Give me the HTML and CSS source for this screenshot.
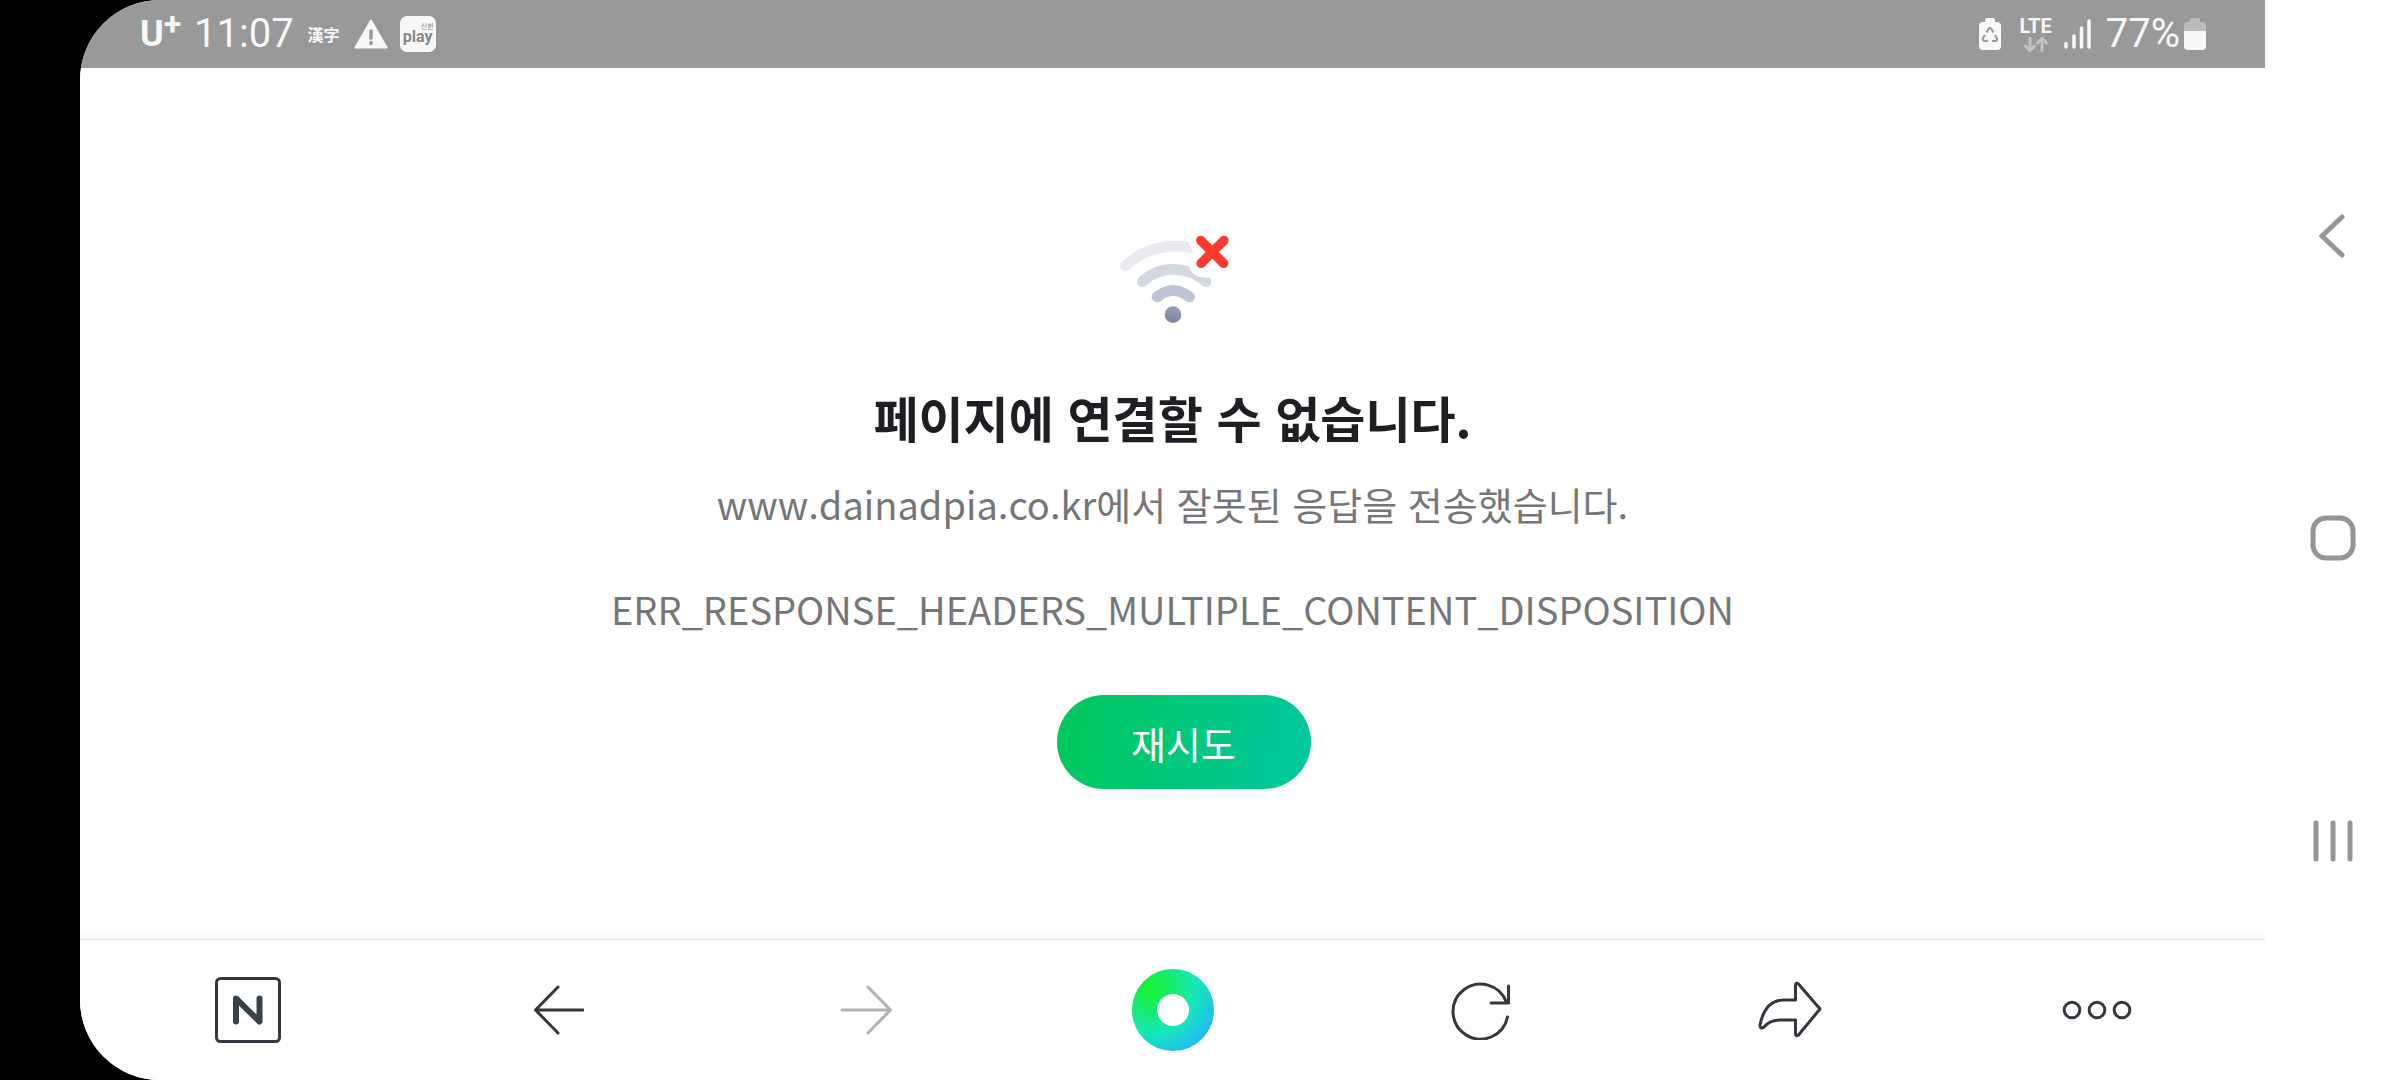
FILE: index.html
```html
<!DOCTYPE html>
<html lang="ko">
<head>
  <meta charset="UTF-8">
  <meta name="viewport" content="width=device-width, initial-scale=1">
  <title>페이지에 연결할 수 없습니다.</title>
  <link rel="stylesheet" href="styles.css">
</head>
<body>
  <div class="screen">
    <header class="status-bar">
      <div class="status-left">
        <span class="carrier">U<sup>+</sup></span>
        <span class="status-text">11:07</span>
        <span class="hanja">漢字</span>
        <svg class="warning" width="34" height="30" viewBox="0 0 34 30">
          <path d="M17 1.500L32.500 28.500H1.500z" fill="#f8f8f8" stroke="#f8f8f8" stroke-width="2" stroke-linejoin="round"/>
          <path d="M17 12v7M17 23.500v1" stroke="#999" stroke-width="3.500" stroke-linecap="round"/>
        </svg>
        <span class="play-app"><small>신한</small><b>play</b></span>
      </div>
      <div class="status-right">
        <svg class="saver" width="22" height="32" viewBox="0 0 22 32">
          <path d="M6 4V2q0-2 2-2h6q2 0 2 2v2h2q4 0 4 4v20q0 4-4 4H4q-4 0-4-4V8q0-4 4-4z" fill="#f8f8f8"/>
          <path d="M7.500 14.500L9.500 11q1.500-2 3 0l2 3.500M16 17l2 3.500q.500 2.500-2 2.500h-3M9 23H6q-3-.500-2-3l2-3" fill="none" stroke="#999" stroke-width="2"/>
        </svg>
        <div class="lte">
          <span>LTE</span>
          <svg width="24" height="15" viewBox="0 0 24 15">
            <path d="M6 1v12M1.500 9L6 13.500 10.500 9M18 14V2M13.500 6L18 1.500 22.500 6" fill="none" stroke="#c4c4c4" stroke-width="3" stroke-linecap="round"/>
          </svg>
        </div>
        <svg class="signal" width="28" height="30" viewBox="0 0 28 30">
          <path d="M2 24.500v3.500M10 17v11M17.500 9v19M25 2v26" stroke="#f8f8f8" stroke-width="3.500" stroke-linecap="round"/>
        </svg>
        <span class="status-text">77%</span>
        <svg class="battery" width="22" height="32" viewBox="0 0 22 32">
          <path d="M6 4V2q0-2 2-2h6q2 0 2 2v2h2q4 0 4 4v5H0V8q0-4 4-4z" fill="#bbb"/>
          <path d="M0 13h22v15q0 4-4 4H4q-4 0-4-4z" fill="#f8f8f8"/>
        </svg>
      </div>
    </header>

    <main class="error-page">
      <svg class="error-icon" width="120" height="90" viewBox="67 72 360 270">
        <defs>
          <linearGradient id="dot" x1="0" y1="0" x2="0" y2="1">
            <stop offset="0" stop-color="#949db8"/>
            <stop offset="1" stop-color="#7c849c"/>
          </linearGradient>
        </defs>
        <g fill="none" stroke-linecap="round" stroke-width="32">
          <path d="M105 167Q185 94 300 112" stroke="#e9ebf0"/>
          <path d="M155 215Q195 177 250 178T346 215" stroke="#d3d8e2"/>
          <path d="M199 261Q247 222 297 261" stroke="#bec4d4"/>
        </g>
        <circle cx="247" cy="314" r="25" fill="url(#dot)"/>
        <path d="M288 88H440V155Q375 203 346 203Q300 202 296 166L312 130z" fill="#fff"/>
        <path d="M330 91L399 160M400 91L331 160" stroke="#fd3b30" stroke-width="28" stroke-linecap="round"/>
      </svg>
      <h1>페이지에 연결할 수 없습니다.</h1>
      <p class="reason">www.dainadpia.co.kr에서 잘못된 응답을 전송했습니다.</p>
      <p class="code">ERR_RESPONSE_HEADERS_MULTIPLE_CONTENT_DISPOSITION</p>
      <div class="actions">
        <button type="button" class="retry">재시도</button>
      </div>
    </main>

    <nav class="toolbar">
      <button type="button" aria-label="네이버 홈">
        <svg width="66" height="66" viewBox="0 0 66 66">
          <rect x="1.500" y="1.500" width="63" height="63" rx="4"/>
          <path d="M21 44.500V21.500L44.500 44.500V21.500" class="logo-n"/>
        </svg>
      </button>
      <button type="button" aria-label="뒤로">
        <svg width="56" height="50" viewBox="-6 0 56 50"><path d="M24 2L1.500 25 24 48M1.500 25H49"/></svg>
      </button>
      <button type="button" aria-label="앞으로" disabled>
        <svg width="56" height="50" viewBox="-6 0 56 50"><path d="M26 2l22.500 23L26 48M48.500 25H0"/></svg>
      </button>
      <button type="button" aria-label="그린닷">
        <svg class="green-dot" width="84" height="84" viewBox="0 0 84 84">
          <defs>
            <radialGradient id="green-dot" gradientUnits="userSpaceOnUse" cx="20" cy="20" r="72">
              <stop offset="0.100" stop-color="#18f03c"/>
              <stop offset="0.650" stop-color="#16e6c0"/>
              <stop offset="1" stop-color="#22bcf0"/>
            </radialGradient>
          </defs>
          <circle cx="43" cy="42" r="28.500" stroke="url(#green-dot)"/>
        </svg>
      </button>
      <button type="button" aria-label="새로고침">
        <svg width="60" height="60" viewBox="-1 -1 60 60">
          <path d="M55.500 36A27.500 27.500 0 1 1 54.500 21.500M56.500 5V22H39"/>
        </svg>
      </button>
      <button type="button" aria-label="공유">
        <svg width="66" height="58" viewBox="-2 0 66 58">
          <path d="M37.500 4Q38 1 40.500 3L62 28 40.500 54Q38 56 37.500 53V39H22Q12 39 6 46Q2 49 2 44Q7 19 26 19H37.500z"/>
        </svg>
      </button>
      <button type="button" aria-label="더보기">
        <svg width="70" height="20" viewBox="0 0 70 20">
          <circle cx="10" cy="10" r="7.800"/><circle cx="35" cy="10" r="7.800"/><circle cx="60" cy="10" r="7.800"/>
        </svg>
      </button>
    </nav>
  </div>

  <nav class="system-nav">
    <button type="button" aria-label="뒤로">
      <svg width="28" height="44" viewBox="2 0 28 44"><path d="M25 3L5 22 25 41"/></svg>
    </button>
    <button type="button" aria-label="홈">
      <svg width="46" height="46" viewBox="0 0 46 46"><rect x="3" y="3" width="40" height="40" rx="13"/></svg>
    </button>
    <button type="button" aria-label="최근 앱">
      <svg width="42" height="42" viewBox="0 0 42 42"><path d="M4 3v36M21 3v36M38 3v36"/></svg>
    </button>
  </nav>
</body>
</html>
```

FILE: styles.css
```css
* {
  box-sizing: border-box;
}
body {
  margin: 0;
  padding-left: 80px;
  min-height: 100vh;
  display: flex;
  background: linear-gradient(90deg, #000 50%, #fff 50%);
  font-family: "Noto Sans CJK KR", sans-serif;
}
h1, p {
  margin: 0;
}
svg {
  display: block;
}
button {
  border: none;
  background: none;
  padding: 0;
  font-family: inherit;
  cursor: pointer;
}

.screen {
  flex: 1;
  display: flex;
  flex-direction: column;
  background: #fff;
  border-radius: 80px 0 0 80px;
  overflow: hidden;
}

/* status bar */
.status-bar {
  height: 68px;
  padding: 0 59px 0 60px;
  display: flex;
  justify-content: space-between;
  align-items: center;
  background: #999;
  color: #f8f8f8;
}
.status-left, .status-right {
  display: flex;
  align-items: center;
}
.status-text {
  font-family: Roboto, sans-serif;
  font-size: 40px;
  line-height: 48px;
}
.carrier {
  display: flex;
  width: 54px;
  font-family: Roboto, sans-serif;
  font-weight: 700;
  font-size: 36px;
  line-height: 52px;
}
.carrier sup {
  font-size: 32px;
  line-height: 32px;
}
.hanja {
  margin-left: 14px;
  font-size: 16px;
  font-weight: 700;
  line-height: 24px;
}
.warning {
  margin-left: 14px;
}
.play-app {
  display: flex;
  flex-direction: column;
  width: 36px;
  height: 36px;
  margin-left: 12px;
  border-radius: 7px;
  background: #f8f8f8;
  color: #888;
}
.play-app small {
  padding: 5px 2px 0;
  text-align: right;
  font-size: 7px;
  line-height: 10px;
}
.play-app b {
  text-align: center;
  font-family: Roboto, sans-serif;
  font-size: 16px;
  line-height: 11px;
}
.lte {
  display: flex;
  flex-direction: column;
  align-items: center;
  gap: 2px;
  margin: 0 12px 0 18px;
  font-family: Roboto, sans-serif;
  font-weight: 700;
  font-size: 20px;
  line-height: 18px;
}
.signal {
  margin-right: 14px;
}
.battery {
  margin-left: 4px;
}

/* error message */
.error-page {
  flex: 1;
  display: flex;
  flex-direction: column;
  align-items: center;
  justify-content: center;
  padding-top: 16px;
  text-align: center;
  background: linear-gradient(0deg, #f7f8fa, #fff 14px);
}
h1 {
  margin-top: 63px;
  font-size: 49px;
  font-weight: 700;
  line-height: 60px;
  color: #1e1e23;
}
.reason, .code {
  font-size: 38px;
  line-height: 60px;
  color: #767678;
}
.reason {
  margin-top: 27px;
}
.code {
  margin-top: 45px;
}
.actions {
  margin-top: 56px;
  padding-left: 22px;
}
.retry {
  display: block;
  width: 254px;
  height: 94px;
  border-radius: 47px;
  background: linear-gradient(100deg, #03c75a, #00c8a0);
  color: #fff;
  font-size: 38px;
}

/* browser toolbar */
.toolbar {
  display: grid;
  grid-template-columns: repeat(7, 1fr);
  height: 141px;
  padding: 0 14px;
  border-top: 1px solid #dfe3e8;
  background: #fff;
}
.toolbar button, .system-nav button {
  display: flex;
  align-items: center;
  justify-content: center;
}
.toolbar svg {
  fill: none;
  stroke: #34373d;
  stroke-width: 3px;
  stroke-linecap: round;
  stroke-linejoin: round;
}
.toolbar .logo-n {
  stroke: #37424b;
  stroke-width: 6px;
}
.toolbar .green-dot {
  stroke-width: 25px;
}
.toolbar button:disabled svg {
  stroke: #b0b1b3;
}

/* android navigation */
.system-nav {
  display: grid;
  grid-template-rows: repeat(3, 1fr);
  width: 135px;
  padding: 85px 0 88px;
  background: #fff;
}
.system-nav svg {
  fill: none;
  stroke: #959595;
  stroke-width: 5px;
  stroke-linecap: round;
}
```
